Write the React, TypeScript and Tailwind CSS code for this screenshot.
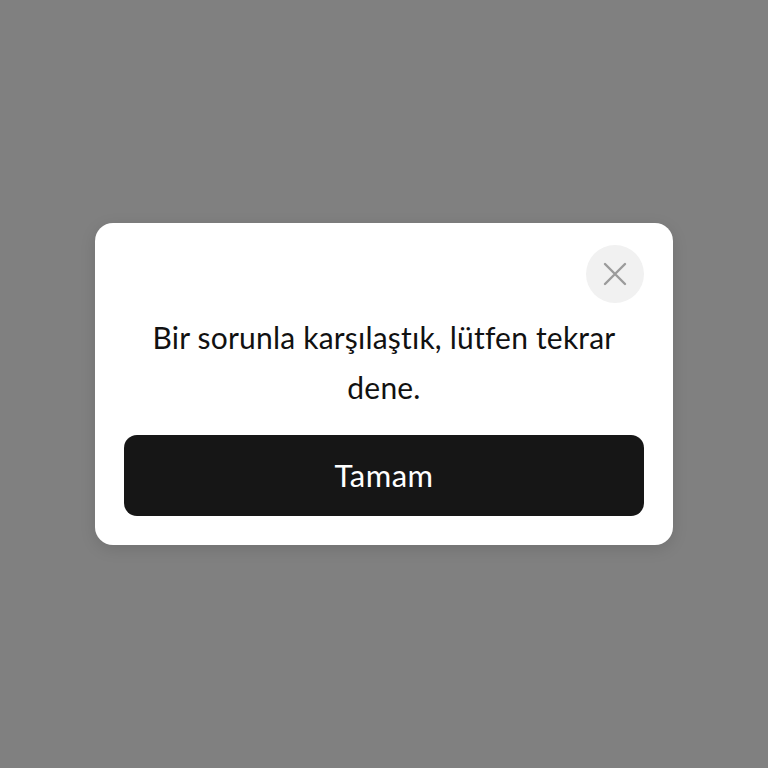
import React from "react";

export default function App() {
  return (
    <div className="w-full h-[768px] bg-[#808080] flex items-center justify-center" style={{ fontFamily: "Lato, 'Noto Sans', sans-serif" }}>
      <div className="w-[578px] bg-white rounded-[18px] px-[29px] pt-[22px] pb-[29px] flex flex-col shadow-[0_4px_16px_rgba(0,0,0,0.12)]">
        <div className="flex justify-end">
          <button className="w-[58px] h-[58px] rounded-full bg-[#f1f1f1] flex items-center justify-center">
            <svg width="24" height="24" viewBox="0 0 24 24" fill="none" stroke="#9b9b9b" strokeWidth="2.4" strokeLinecap="round">
              <path d="M2 2L22 22M22 2L2 22" />
            </svg>
          </button>
        </div>
        <p className="mt-[9px] text-center text-[30px] leading-[50px] text-[#111111] px-[8px] tracking-[0.2px]">
          Bir sorunla karşılaştık, lütfen tekrar dene.
        </p>
        <button className="mt-[23px] h-[81px] w-full rounded-[13px] bg-[#161616] text-white text-[31px] tracking-[0.5px] flex items-center justify-center">
          Tamam
        </button>
      </div>
    </div>
  );
}
